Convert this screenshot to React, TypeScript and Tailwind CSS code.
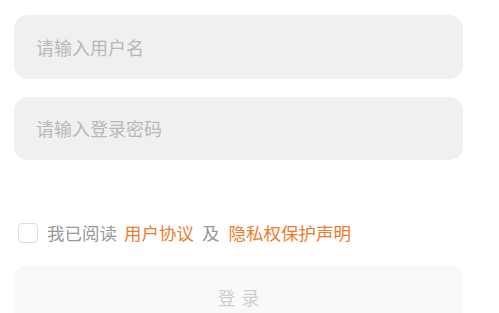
export default function App() {
  return (
    <div
      className="w-[499px] h-[313px] overflow-hidden bg-white"
      style={{ fontFamily: '"Noto Sans CJK SC", "Noto Sans", sans-serif' }}
    >
      <div className="pl-[14px] pr-[36px] pt-[15px] flex flex-col">
        <div className="h-[64px] rounded-[14px] bg-[#f0f0f0] flex items-center px-[22px]">
          <input
            className="w-full bg-transparent outline-none text-[18px] text-[#333] placeholder:text-[#b8b8b8]"
            placeholder="请输入用户名"
          />
        </div>
        <div className="mt-[18px] h-[63px] rounded-[14px] bg-[#f0f0f0] flex items-center px-[22px]">
          <input
            type="password"
            className="w-full bg-transparent outline-none text-[18px] text-[#333] placeholder:text-[#b8b8b8]"
            placeholder="请输入登录密码"
          />
        </div>
        <div className="mt-[62px] flex items-center pl-[4px] h-[22px] text-[17.5px] leading-none whitespace-nowrap">
          <span className="w-[20px] h-[20px] rounded-[4px] border border-[#dcdcdc] bg-white shrink-0" />
          <span className="ml-[9px] text-[#999]">我已阅读</span>
          <span className="ml-[7px] text-[#f07b2c]">用户协议</span>
          <span className="ml-[8px] text-[#999]">及</span>
          <span className="ml-[9px] text-[#f07b2c]">隐私权保护声明</span>
        </div>
        <button className="mt-[21px] h-[64px] rounded-[14px] bg-[#f9f9f9] text-[18px] tracking-[6px] text-[#cfcfcf] flex items-center justify-center pl-[6px]">
          登录
        </button>
      </div>
    </div>
  );
}
